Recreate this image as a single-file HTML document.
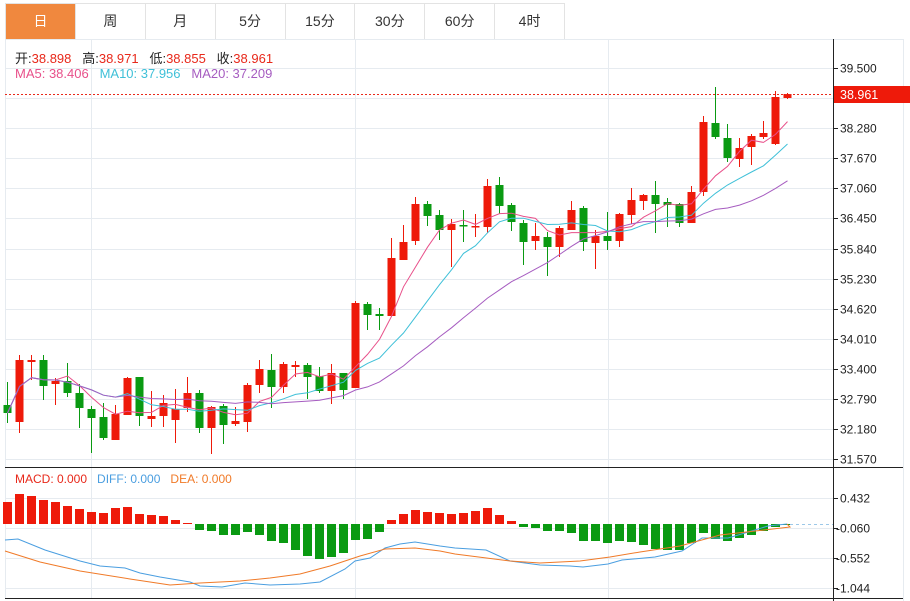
<!DOCTYPE html>
<html><head><meta charset="utf-8"><style>
html,body{margin:0;padding:0;background:#fff;width:910px;height:601px;overflow:hidden;font-family:"Liberation Sans","Noto Sans CJK SC",sans-serif;}
.tabs{position:absolute;left:5px;top:3px;height:35px;width:559px;border:1px solid #e3e3e3;border-right:none;display:flex;}
.tab{width:69px;border-right:1px solid #e3e3e3;text-align:center;line-height:35px;font-size:14px;color:#333;}
.tab.on{background:#f0883e;color:#fff;}
.info{position:absolute;left:15px;font-size:13px;white-space:pre;}
</style></head><body>
<div class="tabs"><div class="tab on">日</div><div class="tab">周</div><div class="tab">月</div><div class="tab">5分</div><div class="tab">15分</div><div class="tab">30分</div><div class="tab">60分</div><div class="tab">4时</div></div>
<svg id="s" width="910" height="601" style="position:absolute;left:0;top:0" xmlns="http://www.w3.org/2000/svg"></svg>
<div class="info" style="top:48px;color:#222">开:<span style="color:#e8281a">38.898</span>   高:<span style="color:#e8281a">38.971</span>   低:<span style="color:#e8281a">38.855</span>   收:<span style="color:#e8281a">38.961</span></div>
<div class="info" style="top:66px"><span style="color:#e8508a">MA5: 38.406</span>   <span style="color:#3fc0d8">MA10: 37.956</span>   <span style="color:#a65cc0">MA20: 37.209</span></div>
<div class="info" style="top:472px;font-size:12px"><span style="color:#e8281a">MACD: 0.000</span>   <span style="color:#4a9ee0">DIFF: 0.000</span>   <span style="color:#f07a28">DEA: 0.000</span></div>
<script>
var R='#ee1a0a',G='#0a9a12';
var c=[
['g',382,405,413,423],['r',355,360,422,433],['r',355,360,362,380],['g',355,360,386,400],['r',378,381,384,405],
['g',363,381,393,397],['g',384,393,408,428],['g',406,409,418,453],['g',403,417,438,440],['r',405,414,440,440],
['r',377,378,415,415],['g',377,377,416,426],['r',391,416,419,427],['r',395,403,416,427],['r',389,409,420,443],
['r',377,393,408,412],['g',390,393,428,433],['r',406,407,428,454],['g',404,406,425,444],['r',407,421,424,426],
['r',383,385,422,432],['r',360,369,385,393],['g',354,370,387,408],['r',362,364,387,393],['r',361,365,367,377],
['g',363,365,377,399],['g',367,376,391,393],['r',364,373,391,404],['g',373,373,390,399],['r',301,303,388,388],
['g',302,304,315,330],['g',308,314,316,330],['r',238,258,316,317],['r',225,242,260,260],['r',197,204,241,245],
['g',201,204,216,226],['g',210,215,230,240],['r',219,224,230,267],['g',210,225,226,242],['r',214,226,227,237],
['r',179,186,227,233],['g',177,185,206,214],['g',203,205,222,231],['g',220,223,242,265],['r',223,236,241,250],
['g',232,237,247,276],['r',226,228,247,257],['r',201,210,230,230],['g',206,208,242,251],['r',230,236,243,269],
['g',212,236,241,250],['r',213,214,241,247],['r',188,200,215,224],['r',194,195,201,210],['g',181,195,204,233],
['g',198,202,205,227],['g',203,204,223,227],['r',186,192,223,223],['r',116,122,192,196],['g',87,123,137,139],
['g',124,138,158,162],['r',138,148,159,167],['r',134,136,147,165],['r',121,133,137,139],['r',91,97,144,145],['r',93,94,98,99]];
var h='';
function L(x1,y1,x2,y2,col,w,d){h+='<line x1="'+x1+'" y1="'+y1+'" x2="'+x2+'" y2="'+y2+'" stroke="'+col+'" stroke-width="'+(w||1)+'"'+(d?' stroke-dasharray="'+d+'"':'')+'/>';}
var ly=[68,98,128,158,188,218,249,279,309,339,369,399,429,459];
ly.forEach(function(y){L(5,y+.5,833,y+.5,'#e6ebf0');});
[498,528,558,588].forEach(function(y){L(5,y+.5,833,y+.5,'#e6ebf0');});
[91,355,608].forEach(function(x){L(x+.5,39,x+.5,598,'#e6ebf0');});
L(5.5,39,5.5,598,'#e6ebf0');L(903.5,39,903.5,601,'#e6ebf0');L(5,39.5,903,39.5,'#e6ebf0');
var closes=[];
c.forEach(function(d,i){var x=7+12*i,col=d[0]=='r'?R:G;
 L(x+.5,d[1],x+.5,d[4],col,1);
 var hh=Math.max(1.5,d[3]-d[2]);h+='<rect x="'+(x-3.5)+'" y="'+d[2]+'" width="8" height="'+hh+'" fill="'+col+'"/>';
 closes.push(d[0]=='r'?d[2]:d[3]);});
function ma(n,col){var p=[];for(var i=0;i<closes.length;i++){var s=0,k=0;for(var j=Math.max(0,i-n+1);j<=i;j++){s+=closes[j];k++;}p.push((7+12*i+.5)+','+(s/k).toFixed(1));}
 h+='<polyline points="'+p.join(' ')+'" fill="none" stroke="'+col+'" stroke-width="1"/>';}
ma(5,'#e8508a');ma(10,'#3fc0d8');ma(20,'#a65cc0');
var mb=[502,494,496,500,502,506,509,512,513,508,507,514,515,516,520,523,530,531,535,535,532,535,541,543,550,556,559,557,553,540,539,532,520,514,510,512,513,514,513,511,508,515,521,527,528,531,531,533,541,541,543,541,542,545,549,550,550,543,533,539,541,538,535,531,527,525];
mb.forEach(function(y,i){var x=7+12*i,z=524;var col=y<z?R:G;var t=Math.min(y,z),hh=Math.max(1,Math.abs(y-z));h+='<rect x="'+(x-4)+'" y="'+t+'" width="9" height="'+hh+'" fill="'+col+'"/>';});
L(790,524.5,833,524.5,'#9cc8e8',1,'3,3');
h+='<polyline points="5,540 18,539 45,550 80,561 100,566 125,568 140,573 160,577 190,582 200,586 222,587 245,583 270,585 300,584 320,582 345,569 355,561 370,558 385,548 400,544 415,542 440,546 455,548 486,550 510,561 540,565 570,566 583,567 608,564 622,560 655,557 682,551 702,538 728,538 745,533 768,526 787,524" fill="none" stroke="#4a9ee0" stroke-width="1"/>';
h+='<polyline points="5,551 40,562 80,571 130,579 170,585 200,583 240,581 270,578 300,574 330,566 360,556 385,549 415,548 440,551 455,554 510,561 540,563 580,561 610,557 640,552 680,546 720,535 790,527 787,524" fill="none" stroke="#f07a28" stroke-width="1"/>';
L(5,467.5,903,467.5,'#222');L(5,598.5,903,598.5,'#222');L(833.5,39,833.5,601,'#222');
var lab=[[68,'39.500'],[128,'38.280'],[158,'37.670'],[188,'37.060'],[218,'36.450'],[249,'35.840'],[279,'35.230'],[309,'34.620'],[339,'34.010'],[369,'33.400'],[399,'32.790'],[429,'32.180'],[459,'31.570'],[498,'0.432'],[528,'-0.060'],[558,'-0.552'],[588,'-1.044']];
lab.forEach(function(a){L(833,a[0]+.5,838,a[0]+.5,'#222');var t=a[1],x=t[0]=='-'?836:840;h+='<text x="'+x+'" y="'+(a[0]+4.5)+'" font-size="12" fill="#222" font-family="Liberation Sans,sans-serif">'+t+'</text>';});
L(5,94.5,833,94.5,'#e8281a',1,'2,2');
h+='<rect x="834" y="86" width="76" height="17" fill="#ee1a0a"/><text x="840" y="99" font-size="12.5" fill="#fff" font-family="Liberation Sans,sans-serif">38.961</text>';
document.getElementById('s').innerHTML=h;
</script>
</body></html>
